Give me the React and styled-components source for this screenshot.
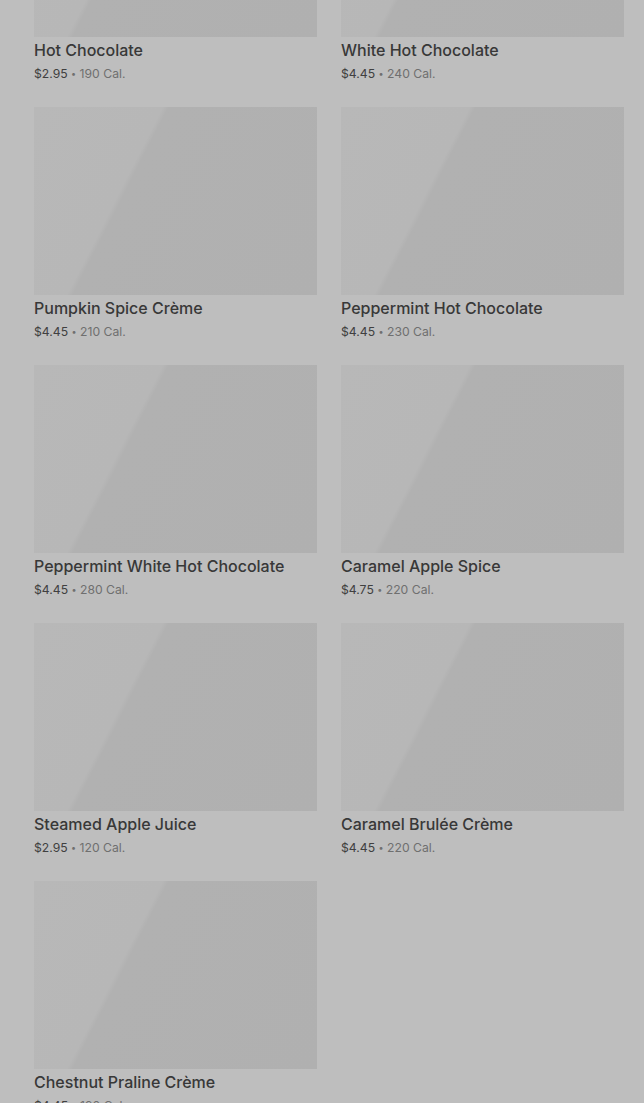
import React from "react";
import styled, { createGlobalStyle } from "styled-components";

const Global = createGlobalStyle`
  html, body { margin: 0; padding: 0; background: #bebebe; overflow: hidden; }
  body { font-family: Inter, "Noto Sans", sans-serif; }
`;

const Page = styled.div`
  width: 644px;
  height: 1103px;
  overflow: hidden;
  background: #bebebe;
`;

const Grid = styled.div`
  display: grid;
  grid-template-columns: 283px 283px;
  column-gap: 24px;
  row-gap: 24px;
  padding-left: 34px;
  margin-top: -151px;
`;

const Card = styled.div`
  display: flex;
  flex-direction: column;
`;

const Thumb = styled.div`
  height: 188px;
  background: linear-gradient(117deg, #b8b8b8 0%, #b7b7b7 34%, #b1b1b1 35.5%, #b0b0b0 100%);
`;

const Title = styled.div`
  margin-top: 3px;
  font-size: 16px;
  line-height: 20px;
  font-weight: 500;
  color: #383838;
  white-space: nowrap;
`;

const Meta = styled.div`
  margin-top: 5px;
  height: 18px;
  font-size: 12.2px;
  line-height: 18px;
  color: #6f6f6f;
  white-space: nowrap;
`;

const Price = styled.span`
  color: #404040;
`;

const Dot = styled.span`
  font-size: 9px;
  line-height: 0;
  vertical-align: 1.5px;
`;

const items = [
  ["Hot Chocolate", "$2.95", "190"],
  ["White Hot Chocolate", "$4.45", "240"],
  ["Pumpkin Spice Crème", "$4.45", "210"],
  ["Peppermint Hot Chocolate", "$4.45", "230"],
  ["Peppermint White Hot Chocolate", "$4.45", "280"],
  ["Caramel Apple Spice", "$4.75", "220"],
  ["Steamed Apple Juice", "$2.95", "120"],
  ["Caramel Brulée Crème", "$4.45", "220"],
  ["Chestnut Praline Crème", "$4.45", "190"],
];

export default function App() {
  return (
    <Page>
      <Global />
      <Grid>
        {items.map(([name, price, cal]) => (
          <Card key={name}>
            <Thumb />
            <Title>{name}</Title>
            <Meta>
              <Price>{price}</Price> <Dot>•</Dot> {cal} Cal.
            </Meta>
          </Card>
        ))}
      </Grid>
    </Page>
  );
}
